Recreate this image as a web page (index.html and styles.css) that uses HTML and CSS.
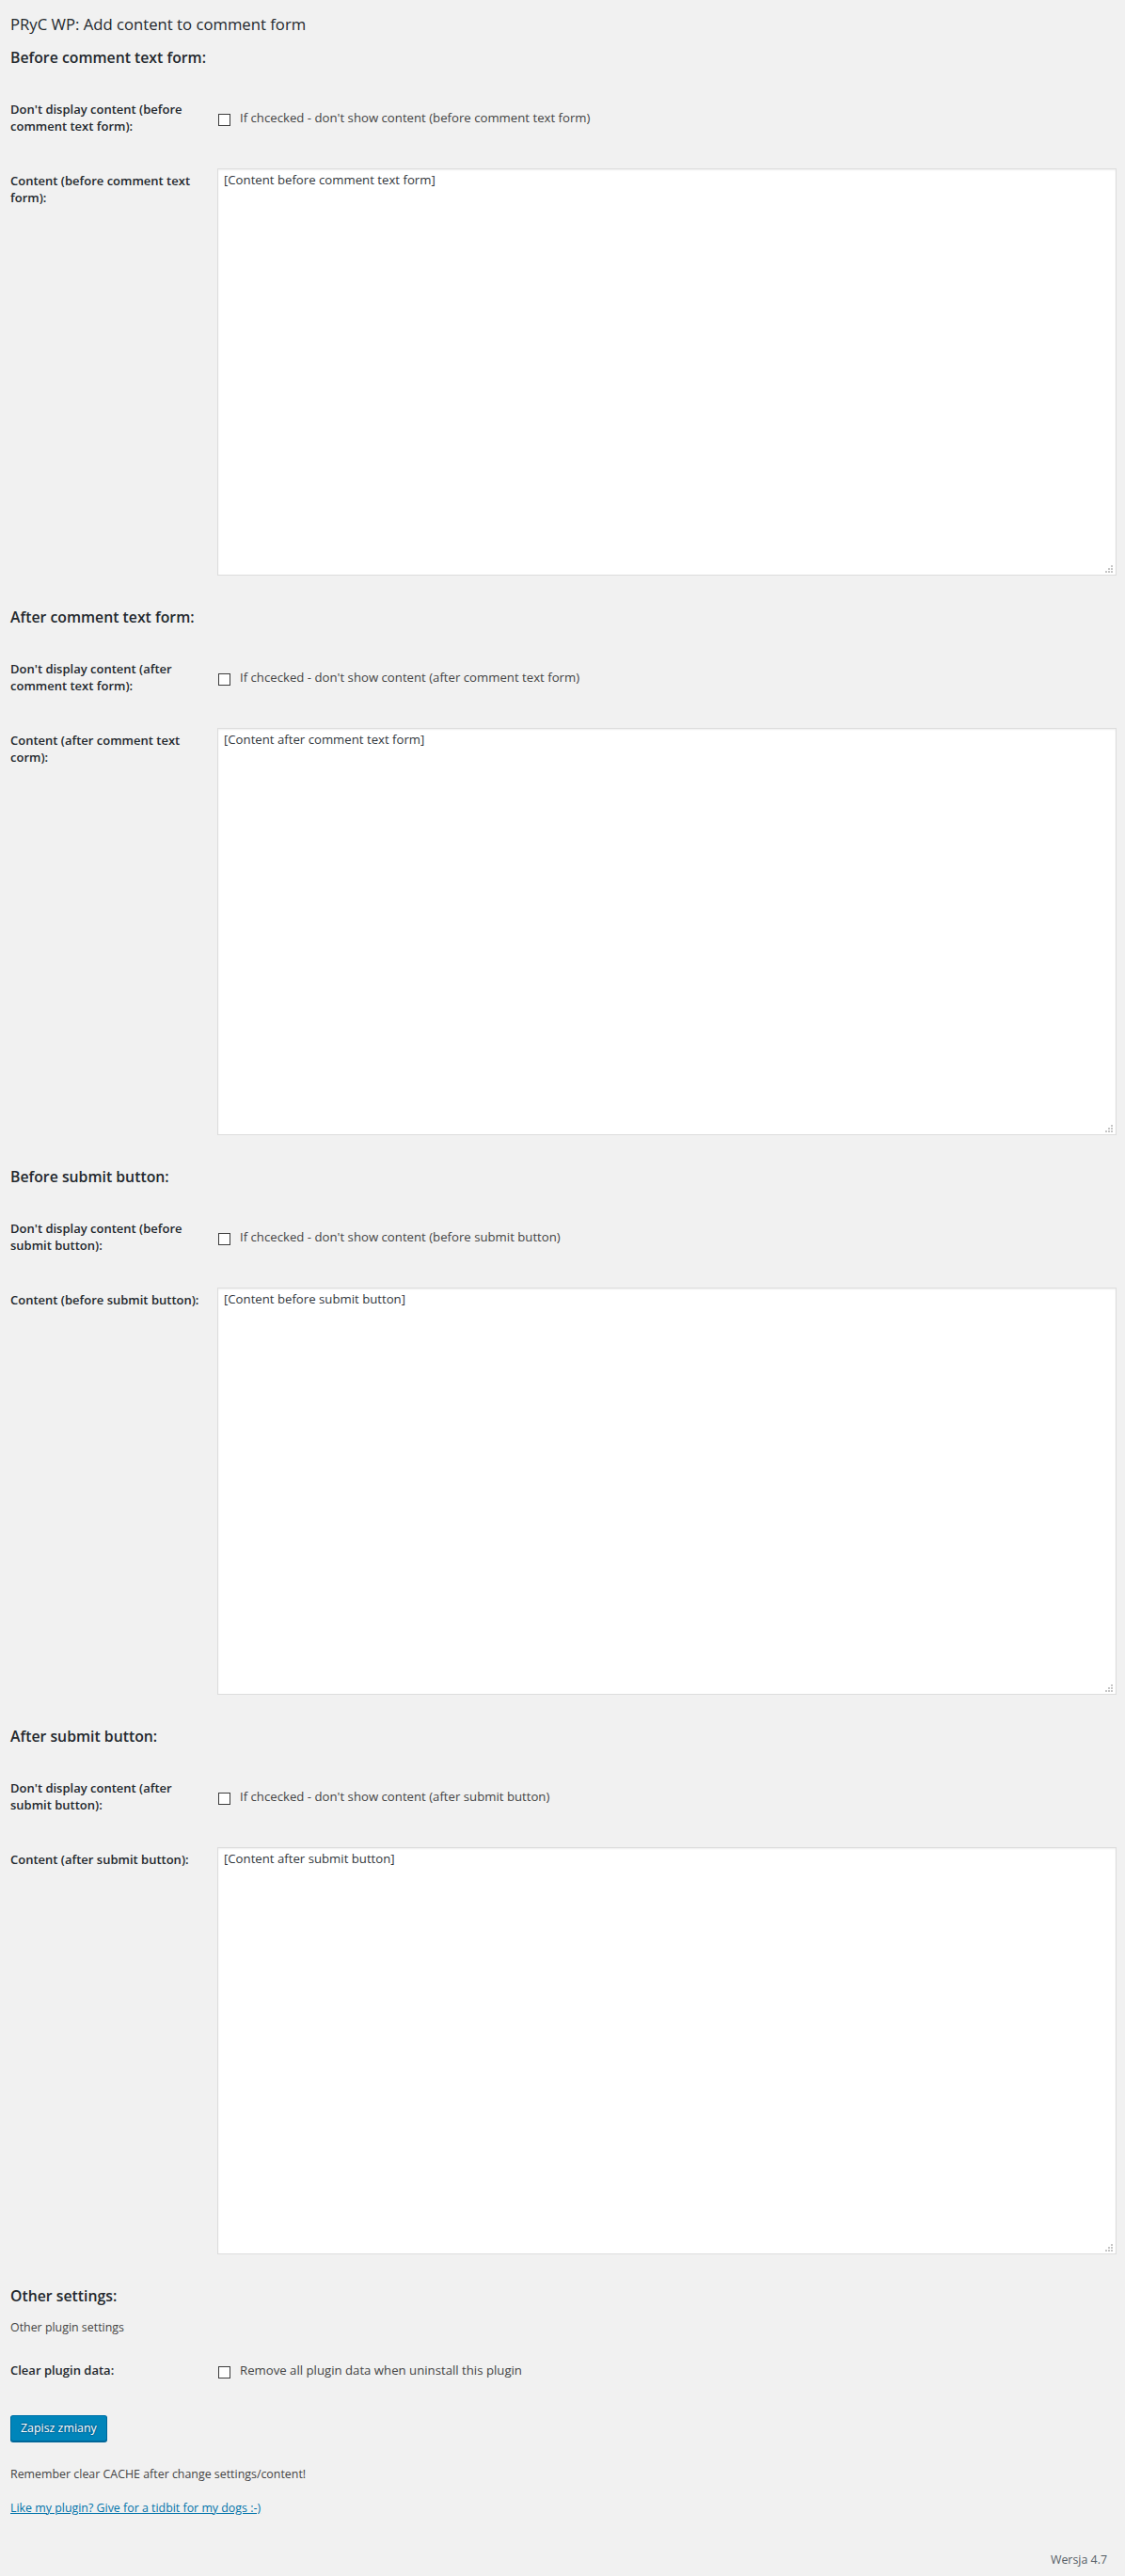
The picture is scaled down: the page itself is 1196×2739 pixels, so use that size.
FILE: index.html
```html
<!DOCTYPE html>
<html lang="pl">
<head>
<meta charset="utf-8">
<title>PRyC WP: Add content to comment form</title>
<link rel="stylesheet" href="styles.css">
</head>
<body>
<div class="wrap">
  <h1 class="title">PRyC WP: Add content to comment form</h1>

  <section class="group first">
    <h2 class="group-title">Before comment text form:</h2>
    <div class="row row-check">
      <div class="label">Don't display content (before comment text form):</div>
      <div class="field"><label class="check"><input type="checkbox" class="box"><span>If chcecked - don't show content (before comment text form)</span></label></div>
    </div>
    <div class="row row-text">
      <div class="label label-ta">Content (before comment text form):</div>
      <div class="field"><div class="ta-wrap"><textarea class="ta">[Content before comment text form]</textarea><svg class="grip" width="8" height="8" viewBox="0 0 8 8"><rect x="6" y="0" width="2" height="2"/><rect x="3" y="3" width="2" height="2"/><rect x="6" y="3" width="2" height="2"/><rect x="0" y="6" width="2" height="2"/><rect x="3" y="6" width="2" height="2"/><rect x="6" y="6" width="2" height="2"/></svg></div></div>
    </div>
  </section>

  <section class="group">
    <h2 class="group-title">After comment text form:</h2>
    <div class="row row-check">
      <div class="label">Don't display content (after comment text form):</div>
      <div class="field"><label class="check"><input type="checkbox" class="box"><span>If chcecked - don't show content (after comment text form)</span></label></div>
    </div>
    <div class="row row-text">
      <div class="label label-ta">Content (after comment text corm):</div>
      <div class="field"><div class="ta-wrap"><textarea class="ta">[Content after comment text form]</textarea><svg class="grip" width="8" height="8" viewBox="0 0 8 8"><rect x="6" y="0" width="2" height="2"/><rect x="3" y="3" width="2" height="2"/><rect x="6" y="3" width="2" height="2"/><rect x="0" y="6" width="2" height="2"/><rect x="3" y="6" width="2" height="2"/><rect x="6" y="6" width="2" height="2"/></svg></div></div>
    </div>
  </section>

  <section class="group">
    <h2 class="group-title">Before submit button:</h2>
    <div class="row row-check">
      <div class="label">Don't display content (before submit button):</div>
      <div class="field"><label class="check"><input type="checkbox" class="box"><span>If chcecked - don't show content (before submit button)</span></label></div>
    </div>
    <div class="row row-text">
      <div class="label label-ta">Content (before submit button):</div>
      <div class="field"><div class="ta-wrap"><textarea class="ta">[Content before submit button]</textarea><svg class="grip" width="8" height="8" viewBox="0 0 8 8"><rect x="6" y="0" width="2" height="2"/><rect x="3" y="3" width="2" height="2"/><rect x="6" y="3" width="2" height="2"/><rect x="0" y="6" width="2" height="2"/><rect x="3" y="6" width="2" height="2"/><rect x="6" y="6" width="2" height="2"/></svg></div></div>
    </div>
  </section>

  <section class="group">
    <h2 class="group-title">After submit button:</h2>
    <div class="row row-check">
      <div class="label">Don't display content (after submit button):</div>
      <div class="field"><label class="check"><input type="checkbox" class="box"><span>If chcecked - don't show content (after submit button)</span></label></div>
    </div>
    <div class="row row-text">
      <div class="label label-ta">Content (after submit button):</div>
      <div class="field"><div class="ta-wrap"><textarea class="ta">[Content after submit button]</textarea><svg class="grip" width="8" height="8" viewBox="0 0 8 8"><rect x="6" y="0" width="2" height="2"/><rect x="3" y="3" width="2" height="2"/><rect x="6" y="3" width="2" height="2"/><rect x="0" y="6" width="2" height="2"/><rect x="3" y="6" width="2" height="2"/><rect x="6" y="6" width="2" height="2"/></svg></div></div>
    </div>
  </section>

  <section class="group">
    <h2 class="group-title">Other settings:</h2>
    <p class="desc">Other plugin settings</p>
    <div class="row row-single">
      <div class="label">Clear plugin data:</div>
      <div class="field"><label class="check"><input type="checkbox" class="box"><span>Remove all plugin data when uninstall this plugin</span></label></div>
    </div>
  </section>

  <div class="submit"><button type="button" class="button-primary">Zapisz zmiany</button></div>
  <p class="note">Remember clear CACHE after change settings/content!</p>
  <p class="note note-link"><a href="#" class="donate">Like my plugin? Give for a tidbit for my dogs :-)</a></p>
</div>
<footer class="footer"><span class="version">Wersja 4.7</span></footer>
</body>
</html>
```

FILE: styles.css
```css
html, body {
  margin: 0;
  padding: 0;
  background: #f1f1f1;
}

body {
  font-family: "Open Sans", "Noto Sans", "Liberation Sans", sans-serif;
  font-size: 12.4px;
  color: #444;
  height: 2739px;
  box-sizing: border-box;
  display: flex;
  flex-direction: column;
}

.wrap {
  padding: 14px 9px 0 11px;
  display: flex;
  flex-direction: column;
}

.title {
  margin: 0;
  font-size: 16.7px;
  line-height: 24px;
  font-weight: 400;
  color: #23282d;
}

.group {
  display: flex;
  flex-direction: column;
  margin-top: 34px;
}

.group.first {
  margin-top: 13px;
}

.group-title {
  margin: 0;
  font-size: 15.8px;
  line-height: 20px;
  font-weight: 600;
  color: #23282d;
}

.row {
  display: grid;
  grid-template-columns: 210px 1fr;
}

.row-check {
  margin-top: 36px;
  align-items: center;
  min-height: 36px;
}

.row-text {
  margin-top: 36px;
  align-items: start;
}

.row-single {
  margin-top: 27px;
  align-items: center;
}

.label {
  font-size: 13px;
  line-height: 18px;
  font-weight: 600;
  color: #23282d;
}

.label-ta {
  padding-top: 4px;
}

.field {
  padding-left: 10px;
  min-width: 0;
}

.check {
  display: flex;
  align-items: center;
  font-size: 13.2px;
  line-height: 18px;
  color: #444;
}

.box {
  -webkit-appearance: none;
  appearance: none;
  box-sizing: border-box;
  width: 13px;
  height: 13px;
  margin: 4px 10px 0 1px;
  padding: 0;
  border: 1px solid #3c3c3c;
  background: #fff;
  border-radius: 0;
  flex: none;
}

.ta-wrap {
  position: relative;
}

.ta {
  display: block;
  box-sizing: border-box;
  width: 100%;
  height: 433px;
  margin: 0;
  padding: 2px 6px;
  border: 1px solid #ddd;
  box-shadow: inset 0 1px 2px rgba(0, 0, 0, 0.07);
  background: #fff;
  color: #32373c;
  font-family: "Open Sans", "Noto Sans", "Liberation Sans", sans-serif;
  font-size: 13.2px;
  line-height: 18.5px;
  resize: none;
  outline: none;
}

.grip {
  position: absolute;
  right: 4px;
  bottom: 3px;
  fill: #c6c6c6;
}

.desc {
  margin: 14px 0 0;
  line-height: 19px;
  color: #444;
}

.submit {
  margin-top: 39px;
  display: flex;
}

.button-primary {
  box-sizing: border-box;
  height: 28px;
  margin: 0;
  padding: 0 10px 1px;
  border: 1px solid;
  border-color: #0073aa #006799 #006799;
  border-radius: 3px;
  background: #0085ba;
  box-shadow: 0 1px 0 #006799;
  color: #fff;
  font-family: "Open Sans", "Noto Sans", "Liberation Sans", sans-serif;
  font-size: 12.4px;
  line-height: 26px;
  text-shadow: 0 -1px 1px #006799, 1px 0 1px #006799, 0 1px 1px #006799, -1px 0 1px #006799;
  cursor: pointer;
}

.note {
  margin: 25px 0 0;
  line-height: 19px;
  color: #444;
}

.note-link {
  margin-top: 16.5px;
}

.donate {
  color: #0073aa;
  text-decoration: underline;
}

.footer {
  margin-top: auto;
  padding: 0 19px 8px 0;
  display: flex;
  justify-content: flex-end;
}

.version {
  font-size: 12.4px;
  line-height: 19px;
  color: #555d66;
}
```
